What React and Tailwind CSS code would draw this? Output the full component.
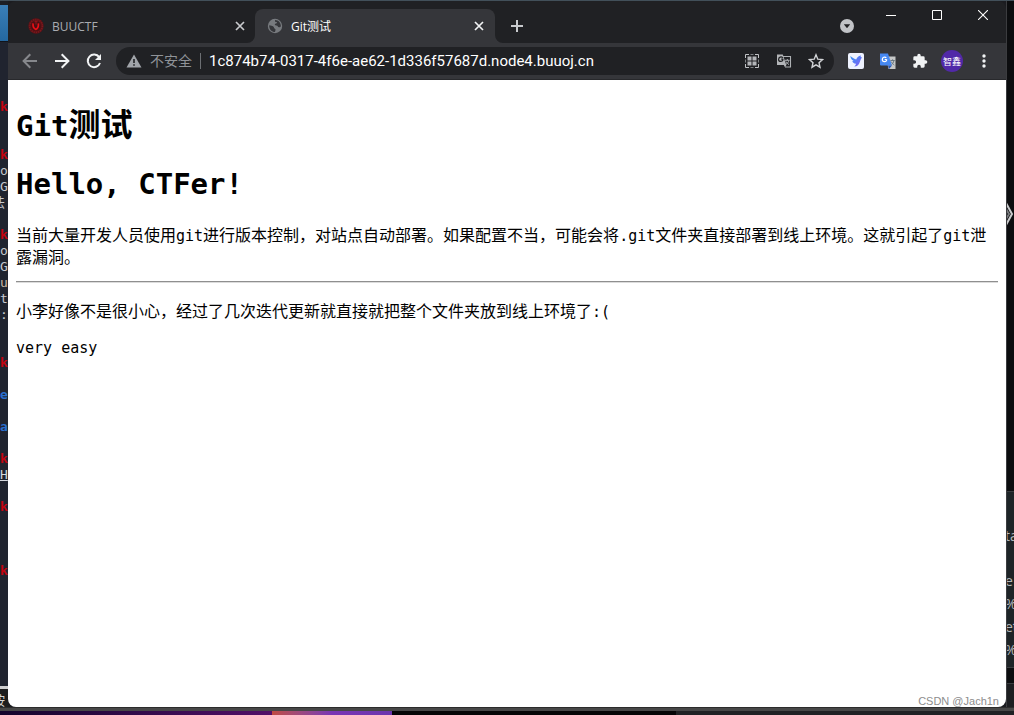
import React from "react";

const TERMINAL_LINES = {
  0: ["k", "text-[#c4040f] font-bold"],
  3: ["k", "text-[#c4040f] font-bold"],
  4: ["o", "text-[#c6c9cf]"],
  5: ["G", "text-[#c6c9cf]"],
  6: ["法", "text-[#c6c9cf] -ml-2"],
  8: ["k", "text-[#c4040f] font-bold"],
  9: ["o", "text-[#c6c9cf]"],
  10: ["G", "text-[#c6c9cf]"],
  11: ["u", "text-[#c9b8a4]"],
  12: ["t", "text-[#c6c9cf]"],
  13: [":", "text-[#c6c9cf]"],
  16: ["k", "text-[#c4040f] font-bold"],
  18: ["e", "text-[#2a6fce] font-bold"],
  20: ["a", "text-[#2a6fce] font-bold"],
  22: ["k", "text-[#c4040f] font-bold"],
  23: ["H", "text-[#d5d8de] underline"],
  25: ["k", "text-[#c4040f] font-bold"],
  29: ["k", "text-[#c4040f] font-bold"],
};

function Terminal() {
  return (
    <div className="flex w-2 shrink-0 flex-col overflow-hidden bg-[#20242f] font-['DejaVu_Sans_Mono','Noto_Sans_CJK_SC',monospace] text-[13px] leading-4">
      <div className="h-1 bg-[#1c1f26]" />
      <div className="h-9 bg-gradient-to-b from-[#3a7fb8] to-[#2468a0]" />
      <div className="h-px bg-[#11141a]" />
      <div className="h-[57px]" />
      {Array.from({ length: 30 }, (_, i) => (
        <div key={i} className={"h-4 whitespace-nowrap " + (TERMINAL_LINES[i] ? TERMINAL_LINES[i][1] : "")}>
          {TERMINAL_LINES[i] ? TERMINAL_LINES[i][0] : ""}
        </div>
      ))}
      <div className="grow" />
      <div className="h-[3px] bg-[#d0d0d0]" />
      <div className="h-[18px] bg-[#1e1e1e] pt-1 text-[#d5d5d5]">
        <span className="-ml-2">按</span>
      </div>
    </div>
  );
}

function RightEdge() {
  return (
    <div className="flex w-2 shrink-0 flex-col overflow-hidden border-l border-[#3b3c3f] bg-[#0c0d0f] font-['Open_Sans',sans-serif] text-sm text-[#b4b7ba]">
      <div className="h-[199px]" />
      <svg className="h-7 w-[7px]" viewBox="0 0 7 28" fill="none" stroke="#c9cacc" strokeWidth="2">
        <path d="M-1 3L5 14L-1 25" />
        <path d="M-1 9L2 14L-1 19" stroke="#77797c" />
      </svg>
      <div className="grow" />
      <div className="-ml-0.5 flex h-[177px] flex-col border-y border-[#3a3d40] bg-[#1e2427] pt-8 leading-[23px]">
        <div className="mb-[22px] whitespace-nowrap">ta</div>
        <div>e</div>
        <div>%</div>
        <div className="whitespace-nowrap">et</div>
        <div>%</div>
      </div>
      <div className="h-[15px]" />
      <div className="h-6 border-t border-[#3a3d40] bg-[#1d1e21]" />
    </div>
  );
}

function CloseIcon({ className }) {
  return (
    <svg viewBox="0 0 10 10" className={className} fill="none" stroke="currentColor" strokeWidth="1.7">
      <path d="M1 1L9 9M9 1L1 9" />
    </svg>
  );
}

function Foot({ side }) {
  return side === "left" ? (
    <svg className="absolute bottom-0 -left-2 size-2" viewBox="0 0 8 8">
      <path d="M8 0V8H0A8 8 0 0 0 8 0Z" fill="#35363a" />
    </svg>
  ) : (
    <svg className="absolute -right-2 bottom-0 size-2" viewBox="0 0 8 8">
      <path d="M0 0V8H8A8 8 0 0 1 0 0Z" fill="#35363a" />
    </svg>
  );
}

function TabStrip() {
  return (
    <header className="flex h-[42px] items-end bg-[#202124] pl-2">
      <div className="flex h-[34px] w-[239px] items-center pr-[10px] pl-3">
        <svg viewBox="0 0 16 16" className="size-4 shrink-0">
          <circle cx="8" cy="8" r="7.7" fill="#5a1216" />
          <circle cx="8" cy="8" r="6.4" fill="none" stroke="#7c181d" strokeWidth="1.6" strokeDasharray="1.2 1" />
          <circle cx="8" cy="8" r="4.9" fill="#4a0f13" />
          <path d="M5 5.4C4.8 8.6 5.8 10.6 7.8 11.4C9.8 10.6 10.6 8.6 10.4 5.4" fill="none" stroke="#ea1017" strokeWidth="1.7" />
          <path d="M6.5 3.6H9.5M8 2.4V6.6" stroke="#8e161b" fill="none" />
        </svg>
        <a href="#buuctf" className="ml-2 grow pt-px text-xs text-[#a9acb1]">BUUCTF</a>
        <button aria-label="关闭 BUUCTF" className="text-[#c8cacd]"><CloseIcon className="size-[10px]" /></button>
      </div>
      <div className="relative flex h-[34px] w-60 items-center rounded-t-lg bg-[#35363a] pr-[11px] pl-3">
        <Foot side="left" />
        <svg viewBox="0 0 16 16" className="size-4 shrink-0">
          <circle cx="8" cy="8" r="7.2" fill="#777a7e" />
          <path d="M2.2 7.2C4 7.8 5.3 7.6 6.3 8.5C7.5 9.4 6.8 10.6 8.2 11C9 11.4 8.3 12.4 8 14C4.8 14 2 11.2 2.2 7.2ZM8.2 2C7.4 3.4 8.3 4 9.5 4C10.6 4.3 9.6 5.5 8.2 5.7C7.4 6 7.8 7.4 9.2 7.5C11 7.4 10.5 9.2 12 9.3C13 9.2 13.3 8.8 13.9 8.2C13.8 4.6 11.5 2.2 8.2 2Z" fill="#35363a" />
        </svg>
        <a href="#git" className="ml-2 grow pt-px text-xs text-white">Git测试</a>
        <button aria-label="关闭 Git测试" className="text-[#f1f3f4]"><CloseIcon className="size-[10px]" /></button>
        <Foot side="right" />
      </div>
      <button aria-label="新标签页" className="ml-2 flex h-[34px] w-7 items-center justify-center text-[#c8cacd]">
        <svg viewBox="0 0 12 12" className="size-3" fill="none" stroke="currentColor" strokeWidth="2"><path d="M6 0V12M0 6H12" /></svg>
      </button>
      <div className="grow" />
      <button aria-label="搜索标签页" className="mr-[14px] flex h-[34px] items-center">
        <svg viewBox="0 0 14 14" className="size-[14px]">
          <circle cx="7" cy="7" r="7" fill="#c1c3c7" />
          <path d="M3.8 5.2H10.2L7 9.2Z" fill="#202124" />
        </svg>
      </button>
      <div className="flex h-7 self-start text-white">
        <button aria-label="最小化" className="flex w-[46px] items-center justify-center">
          <svg viewBox="0 0 10 10" className="size-[10px]" fill="currentColor"><path d="M0 5H10V6H0Z" /></svg>
        </button>
        <button aria-label="最大化" className="flex w-[46px] items-center justify-center">
          <svg viewBox="0 0 10 10" className="size-[10px]" fill="none" stroke="currentColor"><path d="M.5 .5H9.5V9.5H.5Z" /></svg>
        </button>
        <button aria-label="关闭" className="flex w-[46px] items-center justify-center">
          <svg viewBox="0 0 10 10" className="size-[10px]" fill="none" stroke="currentColor" strokeWidth="1.1"><path d="M0 0L10 10M10 0L0 10" /></svg>
        </button>
      </div>
    </header>
  );
}

function IconButton({ label, children }) {
  return (
    <button aria-label={label} className="flex h-7 w-8 shrink-0 items-center justify-center">
      {children}
    </button>
  );
}

function Toolbar() {
  return (
    <div className="flex h-[37px] items-center border-b border-[#28292c] bg-[#35363a] px-[6px]">
      <IconButton label="后退">
        <svg viewBox="0 0 16 16" className="size-4" fill="none" stroke="#86888c" strokeWidth="2"><path d="M15 8H2M8.3 1.3L1.6 8L8.3 14.7" /></svg>
      </IconButton>
      <IconButton label="前进">
        <svg viewBox="0 0 16 16" className="size-4" fill="none" stroke="#f1f3f4" strokeWidth="2"><path d="M1 8H14M7.7 1.3L14.4 8L7.7 14.7" /></svg>
      </IconButton>
      <IconButton label="重新加载">
        <svg viewBox="0 0 16 16" className="size-4" fill="none" stroke="#f1f3f4" strokeWidth="2">
          <path d="M13.2 4.2A6.3 6.3 0 1 0 14 10" />
          <path d="M15 1V7H9Z" fill="#f1f3f4" stroke="none" />
        </svg>
      </IconButton>
      <div className="ml-[6px] flex h-7 min-w-0 grow items-center rounded-full bg-[#202124] pr-[2px] pl-[10px]">
        <button className="flex shrink-0 items-center text-sm text-[#8f9398]">
          <svg viewBox="0 0 16 14" className="mr-2 h-[14px] w-4">
            <path d="M8 .5L15.5 13.5H.5Z" fill="#a1a5aa" />
            <path d="M7.2 5H8.8V9H7.2ZM7.2 10.2H8.8V11.8H7.2Z" fill="#202124" />
          </svg>
          不安全
        </button>
        <span className="mx-2 h-4 w-px bg-[#6c6f73]" />
        <input
          aria-label="地址"
          defaultValue="1c874b74-0317-4f6e-ae62-1d336f57687d.node4.buuoj.cn"
          className="min-w-0 grow bg-transparent font-[Roboto,sans-serif] text-[15px] text-white outline-none"
        />
        <IconButton label="二维码">
          <svg viewBox="0 0 16 16" className="size-4">
            <path d="M1.5 5V1.5H5M11 1.5H14.5V5M14.5 11V14.5H11M5 14.5H1.5V11" fill="none" stroke="#c0c2c5" />
            <path d="M6.5 1.5H9.5M6.5 14.5H9.5M1.5 6.5V9.5M14.5 6.5V9.5" fill="none" stroke="#7d8083" />
            <path d="M3.5 3.5H7.5V7.5H3.5ZM8.5 3.5H12.5V7.5H8.5ZM3.5 8.5H7.5V12.5H3.5ZM8.5 8.5H12.5V12.5H8.5Z" fill="#b3b5b8" />
          </svg>
        </IconButton>
        <IconButton label="翻译此页">
          <svg viewBox="0 0 16 16" className="size-4">
            <path d="M7 3.5H14.5V14H9" fill="none" stroke="#aeb1b4" strokeWidth="1.1" />
            <path d="M1 1.5H6.8L10.3 12H1Z" fill="#b3b5b8" />
            <path d="M7.3 6.2H5.2M6.8 4.8C5.4 3.2 2.6 4 2.6 6.4C2.6 9 6.8 9.2 7 6.3" fill="none" stroke="#202124" strokeWidth="1.2" />
            <path d="M9 7.3H13.5M11.3 6V7.3M12.8 7.5C12.4 9.3 11.3 10.5 10.2 11.2M10 8.5C10.8 10 11.8 10.8 13 11.6" fill="none" stroke="#aeb1b4" />
            <path d="M7.8 12H10.3L9 14.3Z" fill="#b3b5b8" />
          </svg>
        </IconButton>
        <IconButton label="收藏">
          <svg viewBox="0 0 16 16" className="size-4" fill="none" stroke="#d0d2d5" strokeWidth="1.4">
            <path d="M8 1.8L9.8 6.2L14.5 6.6L11 9.7L12 14.2L8 11.8L4 14.2L5 9.7L1.5 6.6L6.2 6.2Z" />
          </svg>
        </IconButton>
      </div>
      <div className="ml-[6px] flex shrink-0">
        <IconButton label="飞鸟扩展">
          <svg viewBox="0 0 16 16" className="size-4">
            <defs>
              <linearGradient id="bird" x1="0" y1="0" x2="1" y2="1">
                <stop offset="0" stopColor="#2f9af5" />
                <stop offset="1" stopColor="#8a5af5" />
              </linearGradient>
            </defs>
            <rect width="16" height="16" rx="2" fill="#eff3ff" />
            <path d="M2.3 3C4.6 5 6.6 5.6 8.2 6.6C9 4.4 10.8 2.8 12.8 2.2C12.4 3.6 12.8 4.6 14.2 4.4C13 5.4 12.6 6.6 12 8.4C11.2 11.4 9.4 13.4 6 13.6C7.2 12.8 7.9 12 8 10.8C5.6 10.4 4.6 9.4 4.2 8.2L5.6 8C3.6 7 2.6 5.2 2.3 3Z" fill="url(#bird)" />
          </svg>
        </IconButton>
        <IconButton label="Google 翻译">
          <svg viewBox="0 0 16 16" className="size-4">
            <path d="M6 3.5H15.5V16H8.5Z" fill="#c6c8c8" />
            <path d="M0 .5H8L12 12.5H1Q0 12.5 0 11.5Z" fill="#4688f1" />
            <path d="M8 12.5H12L9 16Z" fill="#2756b6" />
            <path d="M6.8 6.5H4.7M6.3 4.9C4.8 3.3 2.3 4.4 2.3 6.5C2.3 9.3 6.6 9.5 6.7 6.5" fill="none" stroke="white" strokeWidth="1.2" />
            <path d="M10.5 7.5H14.7M12.6 6.3V7.5M13.9 7.6C13.5 9.7 12.5 10.8 11.8 11.5M11.4 8.7C12.2 10.4 13.2 11.3 14.3 12.1" fill="none" stroke="#6a7882" />
          </svg>
        </IconButton>
        <IconButton label="扩展程序">
          <svg viewBox="0 0 24 24" className="size-4" fill="#f1f3f4">
            <path d="M20.5 11H19V7a2 2 0 0 0-2-2h-4V3.5a2.5 2.5 0 0 0-5 0V5H4a2 2 0 0 0-2 2v3.8h1.5a2.7 2.7 0 0 1 0 5.4H2V20a2 2 0 0 0 2 2h3.8v-1.5a2.7 2.7 0 0 1 5.4 0V22H17a2 2 0 0 0 2-2v-4h1.5a2.5 2.5 0 0 0 0-5Z" />
          </svg>
        </IconButton>
        <IconButton label="用户账号">
          <span className="flex size-[22px] items-center justify-center rounded-full bg-[#5129a8] text-[9px] leading-none whitespace-nowrap text-white">智鑫</span>
        </IconButton>
        <IconButton label="菜单">
          <svg viewBox="0 0 4 14" className="h-[14px] w-1" fill="#f1f3f4">
            <circle cx="2" cy="2" r="1.7" /><circle cx="2" cy="7" r="1.7" /><circle cx="2" cy="12" r="1.7" />
          </svg>
        </IconButton>
      </div>
    </div>
  );
}

function Mono({ children }) {
  return <span className="font-['DejaVu_Sans_Mono',monospace] text-[15px] leading-none">{children}</span>;
}

function Page() {
  return (
    <main className="relative grow bg-white px-2 pt-[22px] font-['Noto_Sans_CJK_SC',sans-serif] text-base leading-[22px] text-black">
      <h1 className="text-[32px] leading-10 font-bold">
        <span className="font-['DejaVu_Sans_Mono',monospace] text-[29px] leading-none">Git</span>测试
      </h1>
      <h1 className="mt-[22px] font-['DejaVu_Sans_Mono',monospace] text-[29px] leading-10 font-bold">Hello, CTFer!</h1>
      <p className="mt-[19px]">
        当前大量开发人员使用<Mono>git</Mono>进行版本控制，对站点自动部署。如果配置不当，可能会将<Mono>.git</Mono>文件夹直接部署到线上环境。这就引起了<Mono>git</Mono>泄露漏洞。
      </p>
      <hr className="mt-[14px] border-t border-b border-t-[#8f8f8f] border-b-[#dcdcdc]" />
      <p className="mt-4">
        小李好像不是很小心，经过了几次迭代更新就直接就把整个文件夹放到线上环境了<Mono>:(</Mono>
      </p>
      <p className="mt-[14px]"><Mono>very easy</Mono></p>
      <div className="absolute right-[7px] bottom-0 font-['Liberation_Sans',sans-serif] text-[11px] leading-3 text-[#8d8d8d]">CSDN @Jach1n</div>
    </main>
  );
}

export default function App() {
  return (
    <div className="flex min-h-screen flex-col bg-[#1b1c20] font-['Open_Sans','Noto_Sans_CJK_SC',sans-serif]">
      <div className="h-px bg-[#42505a]" />
      <div className="flex grow">
        <Terminal />
        <div className="flex min-w-0 grow flex-col overflow-hidden rounded-lg">
          <TabStrip />
          <Toolbar />
          <Page />
        </div>
        <RightEdge />
      </div>
      <div className="h-1 border-t border-[#2c2c2c] bg-[#474747]" />
      <div className="flex h-1">
        <div className="flex h-1 w-[392px]">
          <div className="grow bg-gradient-to-r from-[#14042c] to-[#520f68]" />
          <div className="w-[120px] bg-gradient-to-r from-[#c04a40] via-[#7a34b4] to-[#6b35ad]" />
        </div>
        <div className="grow bg-[#050506]" />
        <div className="w-[338px] bg-[#202124]" />
      </div>
    </div>
  );
}
